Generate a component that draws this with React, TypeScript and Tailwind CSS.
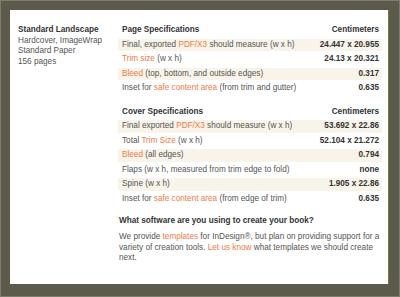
import React from "react";

type Row = {
    label: React.ReactNode;
    value: string;
};

const Link = ({ children }: { children: React.ReactNode }) => (
    <span className="text-[#ee7a45]">{children}</span>
);

const pageRows: Row[] = [
    { label: <>Final, exported <Link>PDF/X3</Link> should measure (w x h)</>, value: "24.447 x 20.955" },
    { label: <><Link>Trim size</Link> (w x h)</>, value: "24.13 x 20.321" },
    { label: <><Link>Bleed</Link> (top, bottom, and outside edges)</>, value: "0.317" },
    { label: <>Inset for <Link>safe content area</Link> (from trim and gutter)</>, value: "0.635" },
];

const coverRows: Row[] = [
    { label: <>Final exported <Link>PDF/X3</Link> should measure (w x h)</>, value: "53.692 x 22.86" },
    { label: <>Total <Link>Trim Size</Link> (w x h)</>, value: "52.104 x 21.272" },
    { label: <><Link>Bleed</Link> (all edges)</>, value: "0.794" },
    { label: <>Flaps (w x h, measured from trim edge to fold)</>, value: "none" },
    { label: <>Spine (w x h)</>, value: "1.905 x 22.86" },
    { label: <>Inset for <Link>safe content area</Link> (from edge of trim)</>, value: "0.635" },
];

function SpecTable({ title, rows, className = "" }: { title: string; rows: Row[]; className?: string }) {
    return (
        <div className={`flex flex-col gap-[2px] ${className}`}>
            {/* header */}
            <div className="h-[12.5px] flex items-center justify-between pl-[4px] pr-[3px] font-bold text-[#333]">
                <span>{title}</span>
                <span>Centimeters</span>
            </div>
            {rows.map((row, i) => (
                <div
                    key={i}
                    className={`h-[12.5px] flex items-center justify-between pl-[4px] pr-[3px] whitespace-nowrap ${
                        i % 2 === 0 ? "bg-[#f8f4e9]" : ""
                    }`}
                >
                    <span>{row.label}</span>
                    <span className="font-bold text-[#333]">{row.value}</span>
                </div>
            ))}
        </div>
    );
}

export default function App() {
    return (
        <div className="w-[400px] h-[297px] bg-[#5c5a4a] pl-[9px] pt-[9px] pr-[10px] pb-[12px] border border-[#7d7b6e]">
            <div
                className="h-full bg-white flex pl-[8px] pt-[14px] pr-[6px] border-r border-[#76744a] text-[8.2px] text-[#555] leading-[12.5px]"
                style={{ fontFamily: '"Liberation Sans", Arial, sans-serif' }}
            >
                {/* book summary */}
                <div className="w-[100px] shrink-0 leading-[10.5px] mt-[1px]">
                    <div className="font-bold text-[#333]">Standard Landscape</div>
                    <div>Hardcover, ImageWrap</div>
                    <div>Standard Paper</div>
                    <div>156 pages</div>
                </div>

                <div className="flex-1 flex flex-col">
                    <SpecTable title="Page Specifications" rows={pageRows} />
                    <SpecTable title="Cover Specifications" rows={coverRows} className="mt-[11px]" />

                    <div className="mt-[10px] pl-[1px] font-bold text-[#333] leading-[11px]">
                        What software are you using to create your book?
                    </div>
                    <p className="mt-[6px] pl-[1px] leading-[10.5px] whitespace-nowrap">
                        We provide <Link>templates</Link> for InDesign®, but plan on providing support for a
                        <br />
                        variety of creation tools. <Link>Let us know</Link> what templates we should create
                        <br />
                        next.
                    </p>
                </div>
            </div>
        </div>
    );
}
